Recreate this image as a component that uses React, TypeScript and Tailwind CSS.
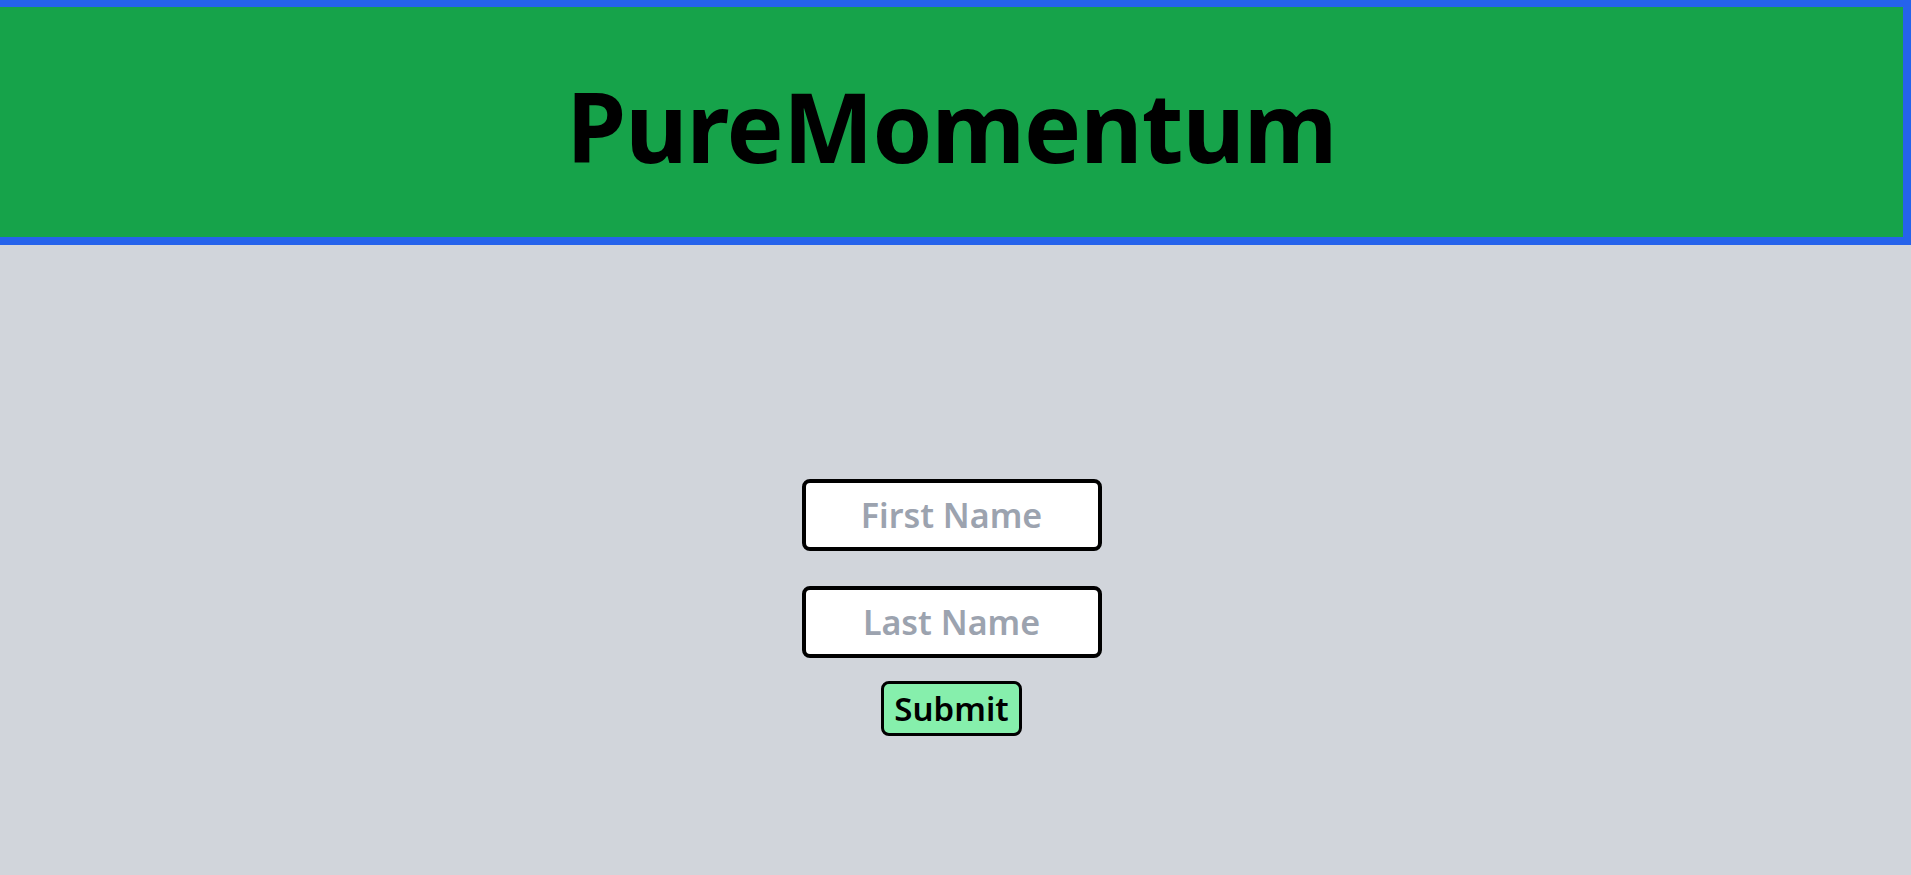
import React from "react";

const App = () => {
  return (
    <div className="min-h-screen w-full bg-[#d1d5db] font-['Noto_Sans',sans-serif]">
      <header className="flex h-[245px] items-center justify-center border-t-[7px] border-r-8 border-b-8 border-[#2563eb] bg-[#16a34a]">
        <h1 className="mt-2 text-[96px] font-bold leading-none tracking-[-1px] text-black">PureMomentum</h1>
      </header>
      <main className="flex flex-col items-center pt-[234px] pr-2">
        <input
          type="text"
          placeholder="First Name"
          className="h-[72px] w-[300px] rounded-lg border-4 border-black bg-white px-3 text-center text-[34px] font-semibold text-black placeholder:text-[#9ca3af] outline-none"
        />
        <input
          type="text"
          placeholder="Last Name"
          className="mt-[35px] h-[72px] w-[300px] rounded-lg border-4 border-black bg-white px-3 text-center text-[34px] font-semibold text-black placeholder:text-[#9ca3af] outline-none"
        />
        <button className="mt-[23px] h-[55px] rounded-lg border-[3px] border-black bg-[#86efac] px-2.5 text-[33px] leading-none font-semibold text-black">
          Submit
        </button>
      </main>
    </div>
  );
};

export default App;
